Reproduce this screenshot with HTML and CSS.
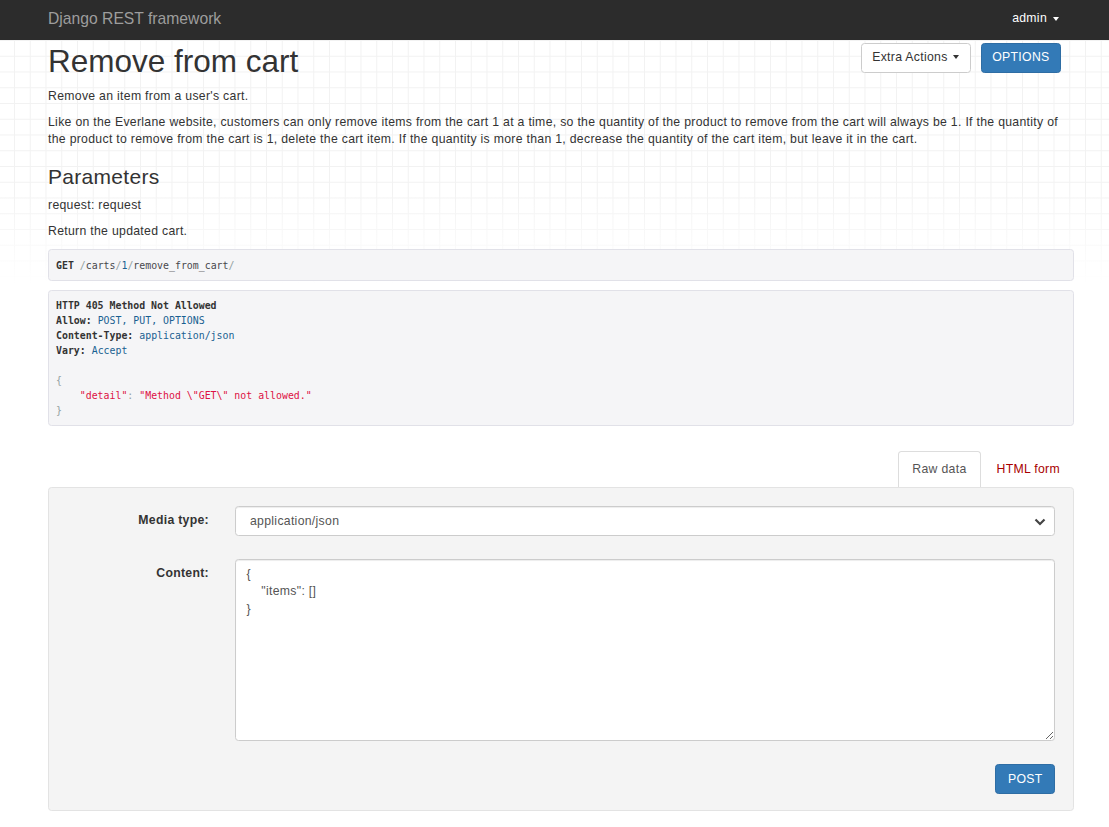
FILE: index.html
```html
<!DOCTYPE html>
<html lang="en">
<head>
<meta charset="utf-8">
<title>Remove from cart – Django REST framework</title>
<link rel="stylesheet" href="styles.css">
</head>
<body>
<header class="navbar">
  <div class="nav-inner">
    <span class="brand">Django REST framework</span>
    <span class="user">admin <span class="caret"></span></span>
  </div>
</header>

<main class="container">
  <div class="page-header">
    <h1>Remove from cart</h1>
    <div class="actions">
      <button class="btn btn-default">Extra Actions <span class="caret dark"></span></button>
      <button class="btn btn-primary">OPTIONS</button>
    </div>
  </div>

  <div class="description">
    <p>Remove an item from a user's cart.</p>
    <p>Like on the Everlane website, customers can only remove items from the cart 1 at a time, so the quantity of the product to remove from the cart will always be 1. If the quantity of the product to remove from the cart is 1, delete the cart item. If the quantity is more than 1, decrease the quantity of the cart item, but leave it in the cart.</p>
    <h2>Parameters</h2>
    <p>request: request</p>
    <p>Return the updated cart.</p>
  </div>

  <pre class="code request"><b>GET</b> <span class="pun">/</span>carts<span class="pun">/</span><span class="lit">1</span><span class="pun">/</span>remove_from_cart<span class="pun">/</span></pre>

  <pre class="code response"><b>HTTP 405 Method Not Allowed</b>
<b>Allow:</b> <span class="lit">POST, PUT, OPTIONS</span>
<b>Content-Type:</b> <span class="lit">application/json</span>
<b>Vary:</b> <span class="lit">Accept</span>

<span class="pun">{</span>
    <span class="str">"detail"</span><span class="pun">:</span> <span class="str">"Method \"GET\" not allowed."</span>
<span class="pun">}</span></pre>

  <ul class="tabs">
    <li class="tab active">Raw data</li>
    <li class="tab link">HTML form</li>
  </ul>

  <form class="well">
    <div class="form-row">
      <label class="form-label" for="media">Media type:</label>
      <div class="select-wrap">
        <select id="media" class="form-control">
          <option>application/json</option>
        </select>
        <svg class="chevron" width="12" height="8" viewBox="0 0 12 8"><path d="M1.5 1.5 L6 6 L10.5 1.5" fill="none" stroke="#444" stroke-width="2.2"/></svg>
      </div>
    </div>
    <div class="form-row content-row">
      <label class="form-label" for="content">Content:</label>
      <textarea id="content" class="form-control textarea">{
    "items": []
}</textarea>
    </div>
    <div class="form-row submit-row">
      <span></span>
      <div class="submit"><button type="button" class="btn btn-primary">POST</button></div>
    </div>
  </form>
</main>
</body>
</html>
```

FILE: styles.css
```css
html, body {
  margin: 0;
  padding: 0;
}

body {
  min-height: 827px;
  font-family: "Liberation Sans", Arial, Helvetica, sans-serif;
  font-size: 12.25px;
  line-height: 17.5px;
  letter-spacing: 0.3px;
  color: #333;
  background-color: #fff;
  background-image:
    linear-gradient(to bottom, rgba(255,255,255,0) 0, rgba(255,255,255,0) 190px, #fff 285px),
    linear-gradient(to right, #f2f2f2 1px, transparent 1px),
    linear-gradient(to bottom, #f2f2f2 1px, transparent 1px);
  background-size: 100% 100%, 15.75px 15.75px, 15.75px 15.75px;
  background-position: 0 0, 14px 40px, 14px 40px;
  background-repeat: no-repeat, repeat, repeat;
}

/* navbar */
.navbar {
  height: 40px;
  background: #2c2c2c;
}

.nav-inner {
  width: 1026px;
  margin-left: 48px;
  height: 40px;
  display: flex;
  align-items: center;
  justify-content: space-between;
}

.brand {
  font-size: 15.7px;
  letter-spacing: 0;
  color: #9d9d9d;
  margin-top: -3px;
}

.user {
  color: #fff;
  padding-right: 15px;
  margin-top: -3px;
  display: flex;
  align-items: center;
  gap: 4px;
}

.caret {
  display: inline-block;
  width: 0;
  height: 0;
  border-top: 4px solid #fff;
  border-left: 3.5px solid transparent;
  border-right: 3.5px solid transparent;
  margin-left: 2px;
}

.caret.dark {
  border-top-color: #333;
  vertical-align: middle;
  margin-top: -2px;
}

/* main */
.container {
  width: 1026px;
  margin-left: 48px;
}

.page-header {
  display: flex;
  justify-content: space-between;
  align-items: flex-start;
  padding-top: 3px;
}

h1 {
  margin: 1px 0 9px 0;
  font-size: 31.5px;
  line-height: 1.1;
  letter-spacing: 0;
  font-weight: 500;
  color: #333;
}

.actions {
  display: flex;
  gap: 10px;
  margin-right: 13px;
}

.btn {
  font-family: inherit;
  font-size: 12.25px;
  line-height: 17.5px;
  letter-spacing: 0.3px;
  padding: 5.25px 10.5px;
  border: 1px solid transparent;
  border-radius: 3.5px;
  cursor: pointer;
  height: 30px;
}

.btn-default {
  background: #fff;
  border-color: #ccc;
  color: #333;
}

.btn-primary {
  background: #337ab7;
  border-color: #2e6da4;
  color: #fff;
}

.description p {
  margin: 0 0 8.6px 0;
}

.description h2 {
  margin: 16.5px 0 8.75px 0;
  font-size: 21px;
  line-height: 1.1;
  font-weight: 500;
  color: #333;
}

/* code blocks */
.code {
  margin: 0 0 9px 0;
  padding: 7.5px 7px;
  font-family: "DejaVu Sans Mono", "Liberation Mono", monospace;
  font-size: 9.9px;
  line-height: 15px;
  letter-spacing: 0;
  color: #48484c;
  background: #f5f5f7;
  border: 1px solid #e1e1e8;
  border-radius: 3.5px;
  white-space: pre;
}

.code b {
  color: #333;
}

.code.response {
  padding: 7px;
  margin-bottom: 25px;
}

.pun { color: #93a1a1; }
.lit { color: #195f91; }
.str { color: #dd1144; }

/* tabs */
.tabs {
  list-style: none;
  margin: 0;
  padding: 0;
  display: flex;
  justify-content: flex-end;
  gap: 2px;
}

.tab {
  padding: 8.75px 13px 8.75px;
  border: 1px solid transparent;
  border-bottom: none;
  border-radius: 3.5px 3.5px 0 0;
}

.tab.active {
  color: #555;
  background: #fff;
  border-color: #ddd;
}

.tab.link {
  color: #a80000;
}

/* well / form */
.well {
  margin: 0;
  padding: 18px 18px 16px 0;
  background: #f4f4f4;
  border: 1px solid #e3e3e3;
  border-radius: 3.5px;
  display: flex;
  flex-direction: column;
}

.form-row {
  display: grid;
  grid-template-columns: 160px 820px;
  column-gap: 26px;
}

.form-label {
  text-align: right;
  font-weight: bold;
  align-self: start;
  padding-top: 6px;
}

.select-wrap {
  position: relative;
}

.form-control {
  box-sizing: border-box;
  width: 820px;
  font-family: "Liberation Sans", Arial, sans-serif;
  font-size: 12.25px;
  line-height: 17.5px;
  letter-spacing: 0.3px;
  color: #555;
  background: #fff;
  border: 1px solid #ccc;
  border-radius: 3.5px;
  box-shadow: inset 0 1px 1px rgba(0,0,0,0.075);
}

select.form-control {
  appearance: none;
  -webkit-appearance: none;
  height: 30px;
  padding: 0 30px 0 14px;
}

.chevron {
  position: absolute;
  right: 9px;
  top: 12px;
  pointer-events: none;
}

.content-row {
  margin-top: 23px;
}

.textarea {
  height: 182px;
  padding: 5.25px 10.5px;
  resize: vertical;
  white-space: pre;
}

.submit-row {
  margin-top: 23px;
}

.submit {
  display: flex;
  justify-content: flex-end;
}

.submit .btn {
  padding: 5.25px 11.5px;
}
```
